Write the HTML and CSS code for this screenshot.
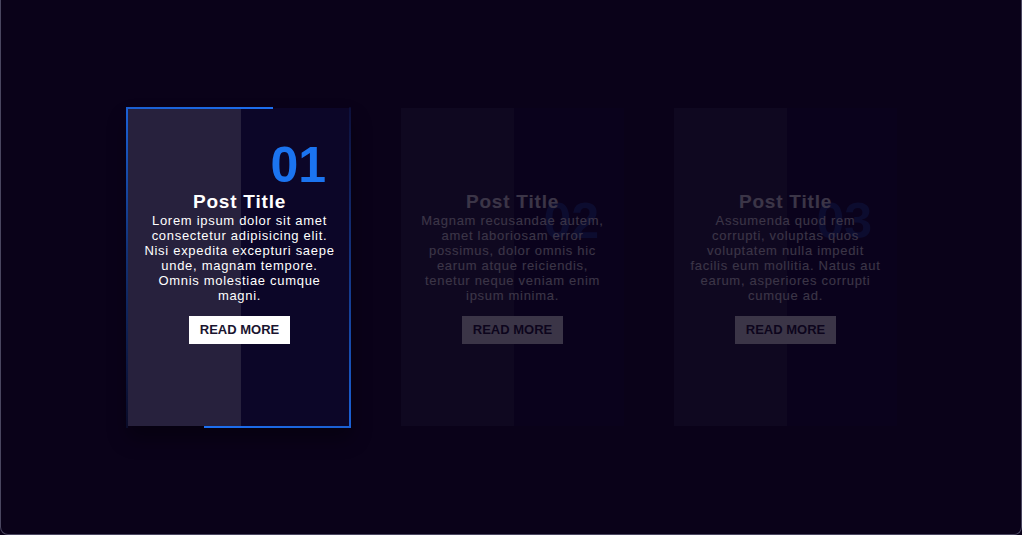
FILE: index.html
```html
<!DOCTYPE html>
<html lang="en">
<head>
<meta charset="utf-8">
<title>Cards</title>
<link rel="stylesheet" href="styles.css">
</head>
<body>
<main class="frame">
  <section class="cards">
    <article class="card active">
      <span class="num">01</span>
      <div class="content">
        <h2 class="title">Post Title</h2>
        <p class="text">Lorem ipsum dolor sit amet consectetur adipisicing elit. Nisi expedita excepturi saepe unde, magnam tempore. Omnis molestiae cumque magni.</p>
        <a class="btn" href="#">READ MORE</a>
      </div>
    </article>
    <article class="card">
      <span class="num">02</span>
      <div class="content">
        <h2 class="title">Post Title</h2>
        <p class="text">Magnam recusandae autem, amet laboriosam error possimus, dolor omnis hic earum atque reiciendis, tenetur neque veniam enim ipsum minima.</p>
        <a class="btn" href="#">READ MORE</a>
      </div>
    </article>
    <article class="card">
      <span class="num">03</span>
      <div class="content">
        <h2 class="title">Post Title</h2>
        <p class="text">Assumenda quod rem corrupti, voluptas quos voluptatem nulla impedit facilis eum mollitia. Natus aut earum, asperiores corrupti cumque ad.</p>
        <a class="btn" href="#">READ MORE</a>
      </div>
    </article>
  </section>
</main>
</body>
</html>
```

FILE: styles.css
```css
html, body {
  margin: 0;
  padding: 0;
  background: #0a0219;
}

body {
  font-family: "Liberation Sans", Arial, sans-serif;
}

.frame {
  box-sizing: border-box;
  height: 535px;
  border: 1px solid #4a4660;
  border-top: none;
  border-radius: 0 0 8px 8px;
  background: #0a0219;
  display: flex;
  align-items: center;
  justify-content: center;
}

.cards {
  display: flex;
  gap: 50px;
  padding-left: 3px;
}

.card {
  position: relative;
  width: 223px;
  height: 318px;
  background: linear-gradient(90deg, #27213d 0, #27213d 113px, #0c0628 113px, #0c0628 100%);
  display: flex;
  align-items: center;
  justify-content: center;
  opacity: 0.2;
}

.card.active {
  opacity: 1;
  box-shadow: 0 12px 18px rgba(0, 0, 0, 0.35);
}

/* edge lines of the active card */
.card.active::before,
.card.active::after {
  content: "";
  position: absolute;
  width: 2px;
  pointer-events: none;
}

.card.active::before {
  left: -2px;
  top: -1px;
  bottom: -2px;
  background: linear-gradient(180deg, #1b62d8 0%, rgba(27, 98, 216, 0.5) 45%, rgba(27, 98, 216, 0.1) 100%);
}

.card.active::after {
  right: 0;
  top: -1px;
  bottom: -2px;
  background: linear-gradient(0deg, #1b62d8 0%, rgba(27, 98, 216, 0.55) 45%, rgba(27, 98, 216, 0.1) 100%);
}

.card.active .content::before,
.card.active .content::after {
  content: "";
  position: absolute;
  height: 2px;
  width: 66%;
}

.card.active .content::before {
  top: -1px;
  left: -2px;
  background: linear-gradient(90deg, #1b5fd0, #1d6ff0);
}

.card.active .content::after {
  bottom: -2px;
  right: 0;
  background: linear-gradient(90deg, #1d70f2, #1b5fd0);
}

.num {
  position: absolute;
  top: 88px;
  right: 25px;
  font-size: 50px;
  line-height: 1;
  font-weight: 700;
  color: #16348a;
}

.card.active .num {
  top: 32px;
  color: #1b74f0;
}

.content {
  display: flex;
  flex-direction: column;
  align-items: center;
  padding: 0 13px;
  text-align: center;
  color: #ffffff;
}

.title {
  position: relative;
  margin: 0;
  font-size: 19px;
  line-height: 22px;
  font-weight: 700;
  letter-spacing: 0.8px;
}

.text {
  position: relative;
  margin: 0 0 13px;
  font-size: 13px;
  line-height: 15px;
  letter-spacing: 0.7px;
}

.btn {
  position: relative;
  display: inline-block;
  padding: 6px 11px;
  background: #ffffff;
  color: #1a1530;
  font-size: 13px;
  line-height: 16px;
  font-weight: 700;
  text-decoration: none;
}
```
